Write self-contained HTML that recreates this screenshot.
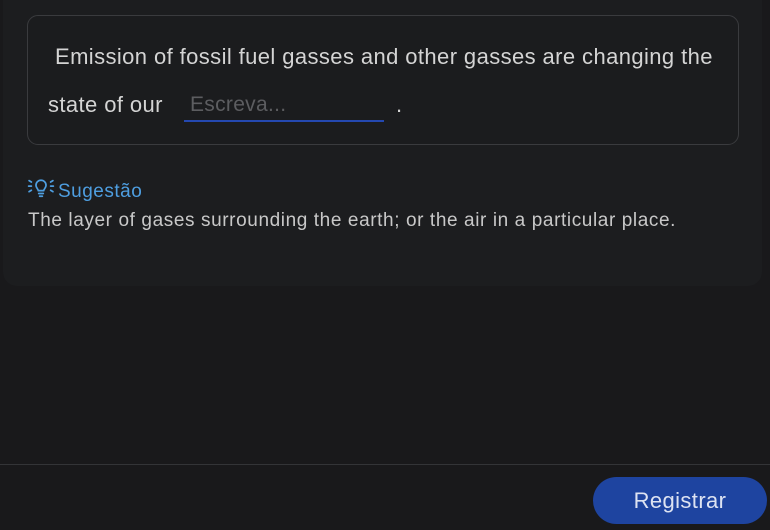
<!DOCTYPE html>
<html><head><meta charset="utf-8"><style>
html,body{margin:0;padding:0}
body{width:770px;height:530px;background:#19191b;position:relative;overflow:hidden;font-family:"Liberation Sans",sans-serif}
.card{position:absolute;left:3px;top:-20px;width:759px;height:306px;background:#1c1d1f;border-radius:14px}
.box{position:absolute;left:27px;top:15px;width:710px;height:128px;border:1px solid #3a3b3e;border-radius:11px;background:#1b1c1e}
.t{position:absolute;color:#d4d4d4;font-size:22px;letter-spacing:0.4px;white-space:nowrap}
.inp{position:absolute;left:184px;top:90px;width:200px;height:32px;border-bottom:2px solid #2448b0;box-sizing:border-box}
.inp span{position:absolute;left:6px;top:3px;color:#5c5d60;font-size:21px;letter-spacing:0.3px}
.sug{position:absolute;left:58px;top:181px;color:#4e9ee0;font-size:19px;letter-spacing:0.5px}
.desc{position:absolute;left:28px;top:210px;color:#c8c8c8;font-size:19px;letter-spacing:0.6px;white-space:nowrap}
.line{position:absolute;left:0;top:464px;width:770px;height:1px;background:#333437}
.btn{position:absolute;left:593px;top:477px;width:174px;height:47px;border-radius:24px;background:#1e44a0;color:#dde3f2;font-size:22px;letter-spacing:0.4px;text-align:center;line-height:47px}
</style></head><body>
<div class="card"></div>
<div class="box"></div>
<div class="t" style="left:55px;top:44px">Emission of fossil fuel gasses and other gasses are changing the</div>
<div class="t" style="left:48px;top:92px">state of our</div>
<div class="inp"><span>Escreva...</span></div>
<div class="t" style="left:396px;top:92px">.</div>
<svg style="position:absolute;left:27px;top:177px" width="28" height="22" viewBox="0 0 30 24" fill="none" stroke="#4e9ee0" stroke-width="1.9" stroke-linecap="round">
<path d="M9.5 9a5.5 5.5 0 1 1 11 0c0 2.5-2 3.8-2.6 5.8h-5.8C11.5 12.8 9.5 11.5 9.5 9z"/>
<path d="M12.5 18h5M13.5 21h3"/>
<path d="M2 4l2.5 1.5M1.5 10h3M2 16l2.5-1.5M28 4l-2.5 1.5M28.5 10h-3M28 16l-2.5-1.5"/>
</svg>
<div class="sug">Sugestão</div>
<div class="desc">The layer of gases surrounding the earth; or the air in a particular place.</div>
<div class="line"></div>
<div class="btn">Registrar</div>
</body></html>
